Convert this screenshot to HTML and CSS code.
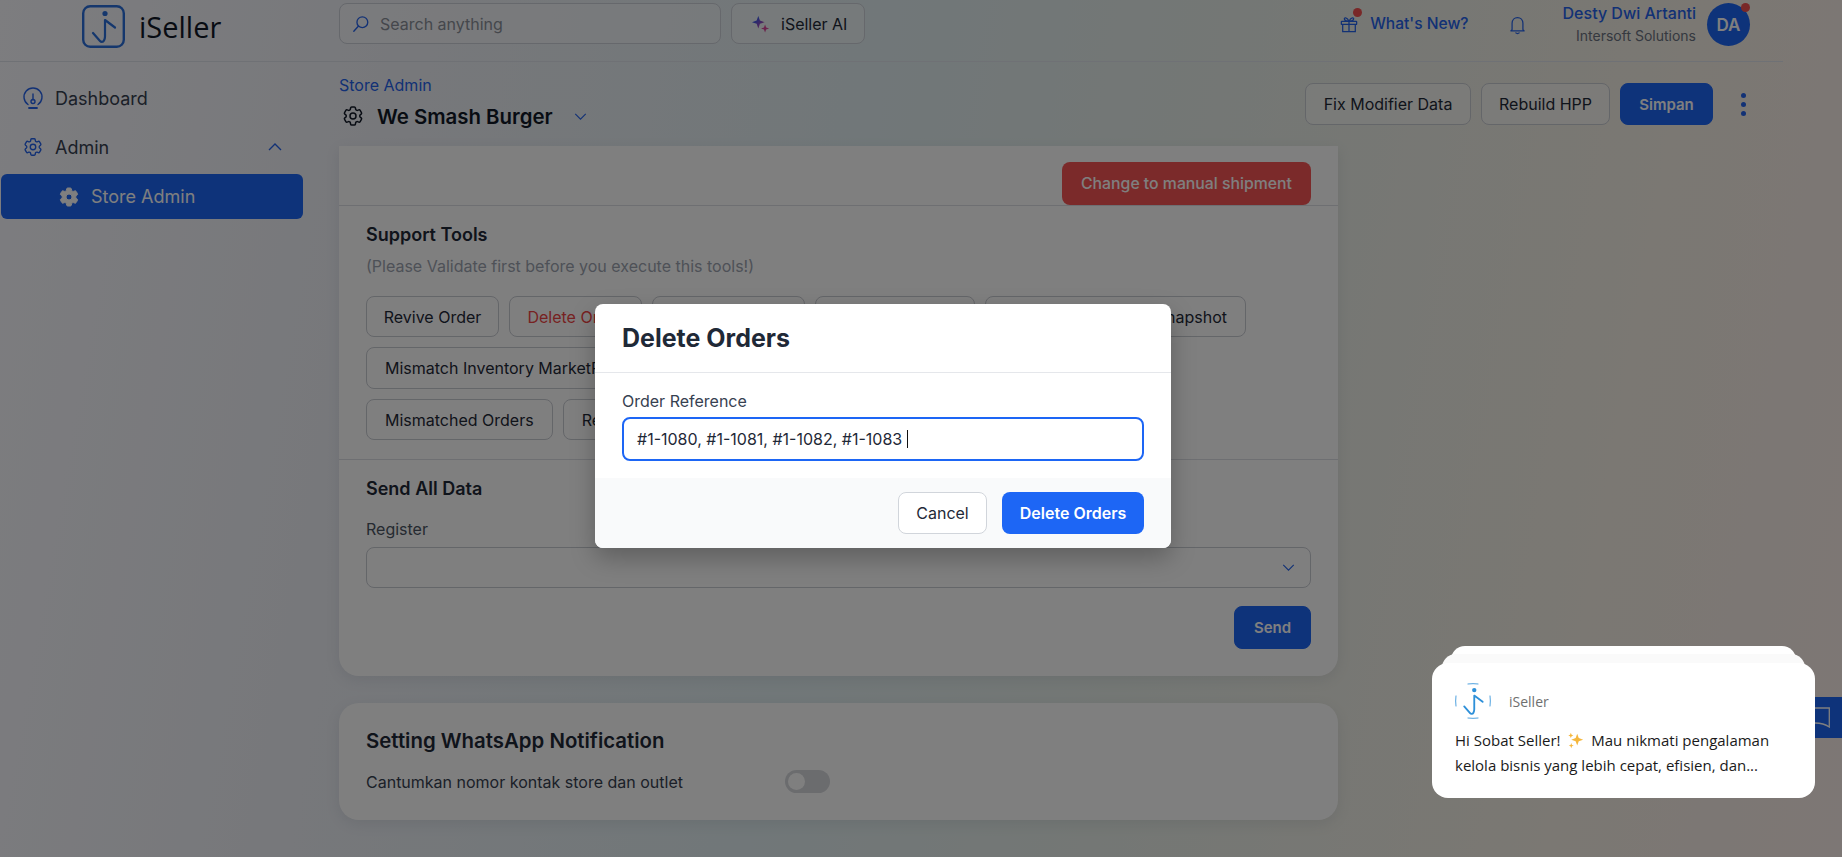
FILE: index.html
```html
<!DOCTYPE html>
<html lang="en">
<head>
  <meta charset="UTF-8">
  <title>iSeller - Store Admin</title>
  <link rel="stylesheet" href="styles.css">
</head>
<body>

<svg class="defs" width="0" height="0">
  <symbol id="cog" viewBox="0 0 24 24">
    <path d="M9.594 3.94c.09-.542.56-.94 1.11-.94h2.593c.55 0 1.02.398 1.11.94l.213 1.281c.063.374.313.686.645.87.074.04.147.083.22.127.325.196.72.257 1.075.124l1.217-.456a1.125 1.125 0 0 1 1.37.49l1.296 2.247a1.125 1.125 0 0 1-.26 1.431l-1.003.827c-.293.241-.438.613-.43.992a7.723 7.723 0 0 1 0 .255c-.008.378.137.75.43.991l1.004.827c.424.35.534.955.26 1.43l-1.298 2.247a1.125 1.125 0 0 1-1.369.491l-1.217-.456c-.355-.133-.75-.072-1.076.124a6.47 6.47 0 0 1-.22.128c-.331.183-.581.495-.644.869l-.213 1.281c-.09.543-.56.94-1.11.94h-2.594c-.55 0-1.019-.398-1.11-.94l-.213-1.281c-.062-.374-.312-.686-.644-.87a6.52 6.52 0 0 1-.22-.127c-.325-.196-.72-.257-1.076-.124l-1.217.456a1.125 1.125 0 0 1-1.369-.49l-1.297-2.247a1.125 1.125 0 0 1 .26-1.431l1.004-.827c.292-.24.437-.613.43-.991a6.932 6.932 0 0 1 0-.255c.007-.38-.138-.751-.43-.992l-1.004-.827a1.125 1.125 0 0 1-.26-1.43l1.297-2.247a1.125 1.125 0 0 1 1.37-.491l1.216.456c.356.133.751.072 1.076-.124.072-.044.146-.086.22-.128.332-.183.582-.495.644-.869l.214-1.28Z M15 12a3 3 0 1 1-6 0 3 3 0 0 1 6 0Z"/>
  </symbol>
  <symbol id="mark" viewBox="0 0 43 43">
    <circle cx="23" cy="8.5" r="2.6" fill="currentColor"/>
    <path d="M11 28l7 8c.8.9 3 1.5 4-.5.6-1.200 1-2 1-4V15l10 7.500" fill="none" stroke="currentColor" stroke-width="2.200" stroke-linecap="round" stroke-linejoin="round"/>
  </symbol>
</svg>

<!-- Top bar -->
<header class="topbar">
  <div class="brand">
    <svg class="brand-mark" viewBox="0 0 43 43">
      <rect x="1.200" y="1.200" width="40.600" height="40.600" rx="7" fill="none" stroke="currentColor" stroke-width="2.400"/>
      <use href="#mark" width="43" height="43"/>
    </svg>
    <span class="brand-name">iSeller</span>
  </div>
  <div class="search">
    <svg class="search-icon" viewBox="0 0 20 20" fill="none" stroke="currentColor" stroke-width="1.500">
      <circle cx="11.500" cy="8" r="6"/><path d="M7 12.500L2 18" stroke-linecap="round"/>
    </svg>
    <span>Search anything</span>
  </div>
  <div class="btn-ai">
    <svg class="ai-icon" viewBox="0 0 20 20">
      <defs><linearGradient id="aigrad" x1="0" y1="0" x2="1" y2="1"><stop offset="0.300" stop-color="#3b56e6"/><stop offset="1" stop-color="#e8459a"/></linearGradient></defs>
      <path d="M7 1l1.800 5.200L14 8l-5.200 1.800L7 15l-1.800-5.200L0 8l5.200-1.800z" fill="url(#aigrad)"/>
      <path d="M14.500 10.500l1.200 3.300 3.300 1.200-3.300 1.200-1.200 3.300-1.200-3.300-3.300-1.200 3.300-1.200z" fill="#d8479a"/>
    </svg>
    <span>iSeller AI</span>
  </div>
  <div class="top-right">
    <div class="whatsnew">
      <span class="gift">
        <svg viewBox="0 0 20 20" fill="none" stroke="currentColor" stroke-width="1.400">
          <rect x="1.500" y="7" width="17" height="3.500" rx=".6"/><path d="M3 10.500V18.500h14V10.500M10 7v11.500M10 7C8 2 4 2.500 5 5c.5 1.400 3 2 5 2zM10 7c2-5 6-4.500 5-2-.5 1.400-3 2-5 2z"/>
        </svg>
        <i class="dot"></i>
      </span>
      <span>What's New?</span>
    </div>
    <svg class="bell" viewBox="0 0 20 24" fill="none" stroke="currentColor" stroke-width="1.500" stroke-linejoin="round">
      <path d="M3.500 17.500V10c0-4 2.800-7 6.500-7s6.500 3 6.500 7v7.500l1.500 1.500H2zM8 21.500c1 1 3 1 4 0" stroke-linecap="round"/>
    </svg>
    <div class="user">
      <div class="user-name">Desty Dwi Artanti</div>
      <div class="user-org">Intersoft Solutions</div>
    </div>
    <div class="avatar">DA<i class="dot"></i></div>
  </div>
</header>

<div class="layout">
  <!-- Sidebar -->
  <nav class="sidebar">
    <div class="nav-item">
      <svg class="nav-icon" viewBox="0 0 22 22" fill="none" stroke="currentColor" stroke-width="1.400" stroke-linecap="round">
        <path d="M6 17.500a9 9 0 1 1 10 0M11 7v6"/><circle cx="11" cy="14.500" r="2"/><path d="M7 21h8" stroke-width="1.800"/>
      </svg>
      <span>Dashboard</span>
    </div>
    <div class="nav-item">
      <svg class="nav-icon" fill="none" stroke="currentColor" stroke-width="1.500"><use href="#cog"/></svg>
      <span>Admin</span>
      <svg class="nav-chevron" viewBox="0 0 14 8" fill="none" stroke="currentColor" stroke-width="1.400"><path d="M1 7l6-6 6 6"/></svg>
    </div>
    <div class="nav-item nav-active">
      <svg class="nav-icon solid"><use href="#cog"/></svg>
      <span>Store Admin</span>
    </div>
  </nav>

  <main class="content">
    <div class="title-bar">
      <div>
        <div class="crumb">Store Admin</div>
        <div class="store-title">
          <svg class="title-gear" fill="none" stroke="currentColor" stroke-width="1.500"><use href="#cog"/></svg>
          <span>We Smash Burger</span>
          <svg class="title-chevron" viewBox="0 0 14 8" fill="none" stroke="currentColor" stroke-width="1.300"><path d="M1 1l6 6 6-6"/></svg>
        </div>
      </div>
      <div class="title-actions">
        <div class="btn w-166">Fix Modifier Data</div>
        <div class="btn w-129">Rebuild HPP</div>
        <div class="btn btn-primary">Simpan</div>
        <div class="kebab"><i></i><i></i><i></i></div>
      </div>
    </div>

    <section class="card card-cut">
      <div class="sec sec-ship">
        <div class="btn btn-danger">Change to manual shipment</div>
      </div>
      <div class="sec sec-tools">
        <h3>Support Tools</h3>
        <p class="hint">(Please Validate first before you execute this tools!)</p>
        <div class="tools">
          <div class="btn w-133">Revive Order</div>
          <div class="btn btn-red-text w-133">Delete Order</div>
          <div class="btn w-153">Delete Payment</div>
          <div class="btn w-160">Recalculate Tax</div>
          <div class="btn w-261">Rebuild Inventory Snapshot</div>
        </div>
        <div class="tools">
          <div class="btn tall">Mismatch Inventory MarketPlace</div>
        </div>
        <div class="tools">
          <div class="btn">Mismatched Orders</div>
          <div class="btn">Rebuild Orders</div>
        </div>
      </div>
      <div class="sec sec-send">
        <h3>Send All Data</h3>
        <label class="field-label">Register</label>
        <div class="select">
          <svg viewBox="0 0 14 8" fill="none" stroke="currentColor" stroke-width="1.300"><path d="M1 1l6 6 6-6"/></svg>
        </div>
        <div class="send-row"><div class="btn btn-primary btn-send">Send</div></div>
      </div>
    </section>

    <section class="card card-wa">
      <h2>Setting WhatsApp Notification</h2>
      <div class="wa-row">
        <span>Cantumkan nomor kontak store dan outlet</span>
        <span class="toggle"><i></i></span>
      </div>
    </section>
  </main>
</div>

<div class="chat-tab">
  <svg viewBox="0 0 15 21" fill="none" stroke="currentColor" stroke-width="1.300"><path d="M0 1H14.300V20C10 17 5 16 0 16"/></svg>
</div>

<div class="backdrop"></div>

<!-- Delete orders modal -->
<div class="modal">
  <div class="modal-head">Delete Orders</div>
  <div class="modal-body">
    <label class="modal-label">Order Reference</label>
    <div class="modal-input">#1-1080, #1-1081, #1-1082, #1-1083<span class="caret"></span></div>
  </div>
  <div class="modal-foot">
    <div class="btn-cancel">Cancel</div>
    <div class="btn-delete">Delete Orders</div>
  </div>
</div>

<!-- Chat popup -->
<div class="chat">
  <div class="chat-back"></div>
  <div class="chat-mid"></div>
  <div class="chat-card">
    <div class="chat-head">
      <svg class="chat-logo" viewBox="0 0 43 43">
        <path d="M15 1.200Q21.500.4 28 1.200M15 41.800Q21.500 42.600 28 41.800M1.200 15Q.4 21.500 1.200 28M41.800 15Q42.600 21.500 41.800 28" fill="none" stroke="currentColor" stroke-width="1"/>
        <use href="#mark" width="43" height="43"/>
      </svg>
      <span>iSeller</span>
    </div>
    <p class="chat-text">Hi Sobat Seller!
      <svg class="sparkle" viewBox="0 0 20 20" fill="#f5b73d">
        <path d="M12 2l1.800 5.200L19 9l-5.200 1.800L12 16l-1.800-5.200L5 9l5.200-1.800z"/>
        <path d="M4.500 1l.9 2.100 2.100.9-2.100.9-.9 2.100-.9-2.100L1.500 4l2.100-.9zM5 13l.8 2.200 2.200.8-2.200.8L5 19l-.8-2.200L2 16l2.200-.8z"/>
      </svg>
      Mau nikmati pengalaman<br>kelola bisnis yang lebih cepat, efisien, dan...</p>
  </div>
</div>

</body>
</html>
```

FILE: styles.css
```css
* { box-sizing: border-box; }
html, body { height: 100%; }
body {
  margin: 0; height: 857px; overflow: hidden; position: relative;
  font-family: Inter, "Liberation Sans", sans-serif; font-size: 16px; color: #1f2937;
  background: linear-gradient(100deg, #fafaff 0%, #eef0f6 22%, #e2eff2 45%, #e8efea 62%, #f6f0e6 85%, #fbeeea 100%);
}
.defs { position: absolute; }
h2, h3, p { margin: 0; }

/* top bar */
.topbar { display: flex; align-items: center; height: 62px; width: 1783px; padding: 0 33px 0 82px; border-bottom: 1px solid #dfe3ea; }
.brand { display: flex; align-items: center; width: 257px; }
.brand-mark { width: 43px; height: 43px; color: #2a6fdb; margin-top: -8px; }
.brand-name { font-family: "Open Sans", sans-serif; font-size: 29px; line-height: 40px; margin-left: 14px; color: #111827; margin-top: -8px; }
.search { display: flex; align-items: center; width: 382px; height: 41px; margin-top: -14px; padding: 0 12px; border: 1px solid #ccd0d8; border-radius: 8px; color: #8a8f98; background: rgba(255,255,255,.35); }
.search-icon { width: 18px; height: 18px; color: #2563eb; margin-right: 10px; }
.btn-ai { display: flex; align-items: center; gap: 11px; height: 41px; width: 134px; margin: -14px 0 0 10px; padding-left: 20px; border: 1px solid #ccd0d8; border-radius: 8px; background: rgba(255,255,255,.35); }
.ai-icon { width: 18px; height: 18px; flex: none; }
.top-right { display: flex; align-items: center; margin-left: auto; margin-top: -12px; }
.whatsnew { display: flex; align-items: center; gap: 12px; margin-top: -2px; font-weight: 500; color: #2563eb; }
.whatsnew > span:last-child { font-size: 15.6px; }
.gift { position: relative; display: block; width: 18px; height: 20px; }
.gift svg { display: block; width: 18px; height: 20px; }
.dot { position: absolute; width: 9px; height: 9px; border-radius: 50%; background: #f25050; }
.gift .dot { top: -6px; right: -4px; }
.bell { width: 17px; height: 20px; color: #2563eb; margin: 0 37px 0 40px; }
.user { text-align: right; }
.user-name { line-height: 22px; font-weight: 500; color: #2563eb; }
.user-org { font-size: 14px; line-height: 22px; margin-top: 1px; color: #6b7280; }
.avatar { position: relative; display: flex; align-items: center; justify-content: center; width: 43px; height: 43px; margin-left: 11px; border-radius: 50%; background: #1d66f5; color: #fff; font-size: 17px; font-weight: 600; }
.avatar .dot { top: 0; right: 0; }

.layout { display: flex; height: 795px; }

/* sidebar */
.sidebar { width: 303px; flex: none; padding-top: 14px; margin-right: 36px; }
.nav-item { display: flex; align-items: center; height: 44px; padding-left: 22px; margin-bottom: 5px; font-size: 18px; color: #374151; }
.nav-icon { width: 22px; height: 22px; color: #2563eb; margin-right: 11px; flex: none; }
.nav-chevron { width: 14px; height: 8px; margin-left: auto; margin-right: 21px; color: #2563eb; }
.nav-active { height: 45px; margin-left: 1px; padding-left: 56px; margin-top: 1px; background: #1d66f5; border-radius: 6px; color: #fff; }
.nav-active .nav-icon { width: 24px; height: 24px; margin-right: 10px; }
.nav-icon.solid { color: #fff; fill: #fff; fill-rule: evenodd; stroke: #fff; stroke-width: 1; }

/* content */
.content { width: 1416px; flex: none; }
.title-bar { display: flex; justify-content: space-between; height: 84px; padding-top: 12px; }
.crumb { line-height: 22px; color: #2563eb; }
.store-title { display: flex; align-items: center; height: 24px; margin-top: 8px; font-size: 20.4px; font-weight: 600; color: #111827; }
.title-gear { width: 24px; height: 24px; margin: 0 12px 0 2px; }
.title-chevron { width: 13px; height: 7px; margin-left: 21px; color: #2563eb; }
.title-actions { display: flex; align-items: center; gap: 10px; height: 42px; margin-top: 9px; }
.kebab { display: flex; flex-direction: column; gap: 4px; margin-left: 18px; margin-right: 9px; }
.kebab i { width: 5px; height: 5px; border-radius: 50%; background: #2563eb; }

.btn { display: flex; align-items: center; justify-content: center; height: 41px; padding: 0 18px; border: 1px solid #c9ccd3; border-radius: 8px; white-space: nowrap; color: #1f2937; background: rgba(255,255,255,.45); }
.title-actions .btn { height: 42px; }
.btn-primary { background: #1d66f5; border-color: #1d66f5; color: #fff; font-size: 15px; font-weight: 600; width: 93px; padding: 0; }
.btn-danger { background: #f75555; border: 0; color: #fff; font-size: 15.8px; font-weight: 500; height: 43px; width: 249px; padding: 0; }
.btn-red-text { color: #ef4444; }
.w-129 { width: 129px; padding: 0; }
.w-133 { width: 133px; padding: 0; }
.w-153 { width: 153px; padding: 0; }
.w-160 { width: 160px; padding: 0; }
.w-166 { width: 166px; padding: 0; }
.w-261 { width: 261px; padding: 0 18px 0 0; justify-content: flex-end; }
.tall { height: 42px; }

.card { width: 999px; background: #fff; border-radius: 20px; box-shadow: 0 4px 14px rgba(90,100,120,.12); }
.card-cut { border-radius: 0 0 20px 20px; }
.sec { padding: 0 27px; }
.sec-ship { display: flex; justify-content: flex-end; height: 60px; padding-top: 16px; border-bottom: 1px solid #dcdfe5; }
.sec-tools { height: 254px; padding-top: 17px; border-bottom: 1px solid #dcdfe5; }
h3 { font-size: 18px; line-height: 24px; font-weight: 600; color: #1f2937; }
.hint { margin-top: 8px; line-height: 22px; color: #9ca3af; }
.tools { display: flex; gap: 10px; margin-bottom: 10px; }
.hint + .tools { margin-top: 19px; }
.sec-send { padding-top: 17px; padding-bottom: 27px; }
.field-label { display: block; margin-top: 17px; line-height: 22px; color: #4b5563; }
.select { display: flex; align-items: center; justify-content: flex-end; height: 41px; margin-top: 7px; padding-right: 15px; border: 1px solid #c9ccd3; border-radius: 8px; color: #2563eb; }
.select svg { width: 13px; height: 7px; }
.send-row { display: flex; justify-content: flex-end; margin-top: 18px; }
.btn-send { width: 77px; height: 43px; }

.card-wa { margin-top: 27px; height: 117px; padding: 24px 27px 0; }
h2 { font-size: 20.4px; line-height: 28px; font-weight: 600; color: #1f2937; }
.wa-row { display: flex; align-items: center; margin-top: 15px; color: #374151; }
.toggle { display: block; width: 45px; height: 23px; margin-left: 102px; padding: 3px; border-radius: 12px; background: #d6d8dd; }
.toggle i { display: block; width: 17px; height: 17px; border-radius: 50%; background: #fff; }

.chat-tab { position: absolute; left: 1800px; top: 697px; width: 42px; height: 41px; padding: 10px 0 0 15px; background: #1d66f5; color: #fff; }
.chat-tab svg { display: block; width: 15px; height: 21px; }

/* modal */
.backdrop { position: absolute; inset: 0; background: rgba(0,0,0,.5); }
.modal { position: absolute; left: 595px; top: 304px; width: 576px; height: 244px; background: #fff; border-radius: 8px; overflow: hidden; box-shadow: 0 10px 24px rgba(0,0,0,.25); display: flex; flex-direction: column; }
.modal-head { height: 69px; padding-left: 27px; line-height: 68px; font-size: 25px; font-weight: 700; color: #1f2937; border-bottom: 1px solid #e5e7eb; }
.modal-body { flex: 1; padding: 17px 27px 0; }
.modal-label { display: block; line-height: 22px; color: #374151; }
.modal-input { display: flex; align-items: center; height: 44px; margin-top: 5px; padding-left: 13px; border: 2px solid #1d66f5; border-radius: 8px; color: #1f2937; }
.caret { width: 1px; height: 18px; margin-left: 5px; background: #111; }
.modal-foot { display: flex; justify-content: flex-end; gap: 15px; height: 70px; padding: 14px 27px 0; background: #f9fafb; }
.btn-cancel, .btn-delete { display: flex; align-items: center; justify-content: center; height: 42px; border-radius: 8px; }
.btn-cancel { width: 89px; background: #fff; border: 1px solid #d1d5db; color: #1f2937; }
.btn-delete { width: 142px; background: #1d66f5; color: #fff; font-weight: 600; }

/* chat popup */
.chat { position: absolute; left: 1432px; top: 646px; width: 383px; height: 152px; font-family: "Open Sans", sans-serif; }
.chat-back, .chat-mid { position: absolute; background: #fff; border-radius: 14px; height: 60px; }
.chat-back { left: 19px; right: 19px; top: 0; }
.chat-mid { left: 10px; right: 10px; top: 8px; background: #fafafa; }
.chat-card { position: absolute; left: 0; right: 0; top: 17px; height: 135px; padding: 20px 23px 0; background: #fff; border-radius: 16px; }
.chat-head { display: flex; align-items: center; gap: 18px; font-size: 14px; color: #6f6f6f; }
.chat-logo { width: 36px; height: 36px; color: #2e90d9; }
.chat-text { margin-top: 9px; font-size: 15px; line-height: 25px; color: #1a1a1a; }
.sparkle { width: 17px; height: 17px; vertical-align: -3px; margin: 0 3px; }
```
